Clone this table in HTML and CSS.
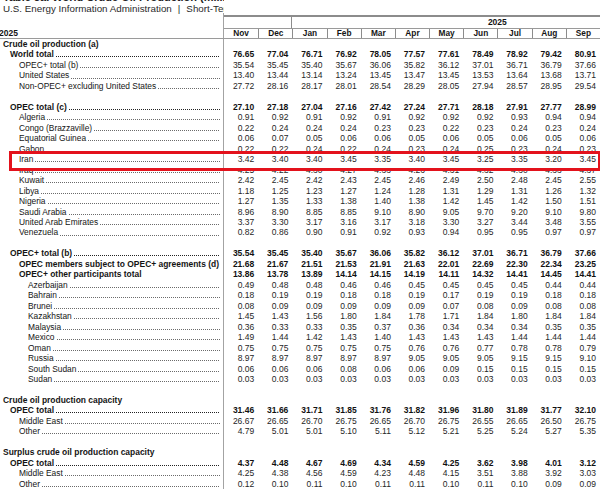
FILE: index.html
```html
<!DOCTYPE html>
<html lang="en">
<head>
<meta charset="utf-8">
<title>Table 3a. World Crude Oil Production</title>
<link rel="stylesheet" href="styles.css">
</head>
<body>
<div class="page">
  <div class="top">
    <div class="titlebox">
      <div class="title">Table 3a. World Crude Oil Production (million barrels per day)</div>
      <div class="subtitle">U.S. Energy Information Administration<span class="sep">|</span>Short-Term Energy Outlook</div>
    </div>
    <div class="topfill"></div>
  </div>

  <div class="hrow group">
    <div class="hl-cell"></div>
    <div class="prev"></div>
    <div class="yr"><span>2025</span></div>
  </div>
  <div class="hrow months">
    <div class="hl-cell yearlbl">2025</div>
    <div class="m first">Nov</div><div class="m">Dec</div><div class="m">Jan</div><div class="m">Feb</div><div class="m">Mar</div><div class="m">Apr</div><div class="m">May</div><div class="m">Jun</div><div class="m">Jul</div><div class="m">Aug</div><div class="m">Sep</div>
  </div>

  <div class="body">
    <div class="row b"><div class="lbl l0"><span>Crude oil production (a)</span></div></div>
    <div class="row b"><div class="lbl l1"><span>World total</span><i class="lead"></i></div><div class="n">76.65</div><div class="n">77.04</div><div class="n">76.71</div><div class="n">76.92</div><div class="n">78.05</div><div class="n">77.57</div><div class="n">77.61</div><div class="n">78.49</div><div class="n">78.92</div><div class="n">79.42</div><div class="n">80.91</div></div>
    <div class="row"><div class="lbl l2"><span>OPEC+ total (b)</span><i class="lead"></i></div><div class="n">35.54</div><div class="n">35.45</div><div class="n">35.40</div><div class="n">35.67</div><div class="n">36.06</div><div class="n">35.82</div><div class="n">36.12</div><div class="n">37.01</div><div class="n">36.71</div><div class="n">36.79</div><div class="n">37.66</div></div>
    <div class="row"><div class="lbl l2"><span>United States</span><i class="lead"></i></div><div class="n">13.40</div><div class="n">13.44</div><div class="n">13.14</div><div class="n">13.24</div><div class="n">13.45</div><div class="n">13.47</div><div class="n">13.45</div><div class="n">13.53</div><div class="n">13.64</div><div class="n">13.68</div><div class="n">13.71</div></div>
    <div class="row"><div class="lbl l2"><span>Non-OPEC+ excluding United States</span><i class="lead"></i></div><div class="n">27.72</div><div class="n">28.16</div><div class="n">28.17</div><div class="n">28.01</div><div class="n">28.54</div><div class="n">28.29</div><div class="n">28.05</div><div class="n">27.94</div><div class="n">28.57</div><div class="n">28.95</div><div class="n">29.54</div></div>
    <div class="row"><div class="lbl"></div></div>
    <div class="row b"><div class="lbl l1"><span>OPEC total (c)</span><i class="lead"></i></div><div class="n">27.10</div><div class="n">27.18</div><div class="n">27.04</div><div class="n">27.16</div><div class="n">27.42</div><div class="n">27.24</div><div class="n">27.71</div><div class="n">28.18</div><div class="n">27.91</div><div class="n">27.77</div><div class="n">28.99</div></div>
    <div class="row"><div class="lbl l2"><span>Algeria</span><i class="lead"></i></div><div class="n">0.91</div><div class="n">0.92</div><div class="n">0.91</div><div class="n">0.92</div><div class="n">0.91</div><div class="n">0.92</div><div class="n">0.92</div><div class="n">0.92</div><div class="n">0.93</div><div class="n">0.94</div><div class="n">0.94</div></div>
    <div class="row"><div class="lbl l2"><span>Congo (Brazzaville)</span><i class="lead"></i></div><div class="n">0.22</div><div class="n">0.24</div><div class="n">0.24</div><div class="n">0.24</div><div class="n">0.23</div><div class="n">0.23</div><div class="n">0.22</div><div class="n">0.23</div><div class="n">0.24</div><div class="n">0.23</div><div class="n">0.24</div></div>
    <div class="row"><div class="lbl l2"><span>Equatorial Guinea</span><i class="lead"></i></div><div class="n">0.06</div><div class="n">0.07</div><div class="n">0.05</div><div class="n">0.06</div><div class="n">0.06</div><div class="n">0.05</div><div class="n">0.06</div><div class="n">0.05</div><div class="n">0.06</div><div class="n">0.05</div><div class="n">0.06</div></div>
    <div class="row"><div class="lbl l2"><span>Gabon</span><i class="lead"></i></div><div class="n">0.22</div><div class="n">0.22</div><div class="n">0.24</div><div class="n">0.22</div><div class="n">0.24</div><div class="n">0.23</div><div class="n">0.24</div><div class="n">0.25</div><div class="n">0.23</div><div class="n">0.24</div><div class="n">0.23</div></div>
    <div class="row hl"><div class="lbl l2"><span>Iran</span><i class="lead"></i></div><div class="n">3.42</div><div class="n">3.40</div><div class="n">3.40</div><div class="n">3.45</div><div class="n">3.35</div><div class="n">3.40</div><div class="n">3.45</div><div class="n">3.25</div><div class="n">3.35</div><div class="n">3.20</div><div class="n">3.45</div></div>
    <div class="row"><div class="lbl l2"><span>Iraq</span><i class="lead"></i></div><div class="n">4.25</div><div class="n">4.22</div><div class="n">4.30</div><div class="n">4.27</div><div class="n">4.33</div><div class="n">4.26</div><div class="n">4.31</div><div class="n">4.32</div><div class="n">4.30</div><div class="n">4.33</div><div class="n">4.37</div></div>
    <div class="row"><div class="lbl l2"><span>Kuwait</span><i class="lead"></i></div><div class="n">2.42</div><div class="n">2.45</div><div class="n">2.42</div><div class="n">2.43</div><div class="n">2.45</div><div class="n">2.46</div><div class="n">2.49</div><div class="n">2.50</div><div class="n">2.48</div><div class="n">2.45</div><div class="n">2.55</div></div>
    <div class="row"><div class="lbl l2"><span>Libya</span><i class="lead"></i></div><div class="n">1.18</div><div class="n">1.25</div><div class="n">1.23</div><div class="n">1.27</div><div class="n">1.24</div><div class="n">1.28</div><div class="n">1.31</div><div class="n">1.29</div><div class="n">1.31</div><div class="n">1.26</div><div class="n">1.32</div></div>
    <div class="row"><div class="lbl l2"><span>Nigeria</span><i class="lead"></i></div><div class="n">1.27</div><div class="n">1.35</div><div class="n">1.33</div><div class="n">1.38</div><div class="n">1.40</div><div class="n">1.38</div><div class="n">1.42</div><div class="n">1.45</div><div class="n">1.42</div><div class="n">1.50</div><div class="n">1.51</div></div>
    <div class="row"><div class="lbl l2"><span>Saudi Arabia</span><i class="lead"></i></div><div class="n">8.96</div><div class="n">8.90</div><div class="n">8.85</div><div class="n">8.85</div><div class="n">9.10</div><div class="n">8.90</div><div class="n">9.05</div><div class="n">9.70</div><div class="n">9.20</div><div class="n">9.10</div><div class="n">9.80</div></div>
    <div class="row"><div class="lbl l2"><span>United Arab Emirates</span><i class="lead"></i></div><div class="n">3.37</div><div class="n">3.30</div><div class="n">3.17</div><div class="n">3.16</div><div class="n">3.17</div><div class="n">3.18</div><div class="n">3.30</div><div class="n">3.27</div><div class="n">3.44</div><div class="n">3.48</div><div class="n">3.55</div></div>
    <div class="row"><div class="lbl l2"><span>Venezuela</span><i class="lead"></i></div><div class="n">0.82</div><div class="n">0.86</div><div class="n">0.90</div><div class="n">0.91</div><div class="n">0.92</div><div class="n">0.93</div><div class="n">0.94</div><div class="n">0.95</div><div class="n">0.95</div><div class="n">0.97</div><div class="n">0.97</div></div>
    <div class="row"><div class="lbl"></div></div>
    <div class="row b"><div class="lbl l1"><span>OPEC+ total (b)</span><i class="lead"></i></div><div class="n">35.54</div><div class="n">35.45</div><div class="n">35.40</div><div class="n">35.67</div><div class="n">36.06</div><div class="n">35.82</div><div class="n">36.12</div><div class="n">37.01</div><div class="n">36.71</div><div class="n">36.79</div><div class="n">37.66</div></div>
    <div class="row b"><div class="lbl l2"><span>OPEC members subject to OPEC+ agreements (d)</span></div><div class="n">21.68</div><div class="n">21.67</div><div class="n">21.51</div><div class="n">21.53</div><div class="n">21.91</div><div class="n">21.63</div><div class="n">22.01</div><div class="n">22.69</div><div class="n">22.30</div><div class="n">22.34</div><div class="n">23.25</div></div>
    <div class="row b"><div class="lbl l2"><span>OPEC+ other participants total</span></div><div class="n">13.86</div><div class="n">13.78</div><div class="n">13.89</div><div class="n">14.14</div><div class="n">14.15</div><div class="n">14.19</div><div class="n">14.11</div><div class="n">14.32</div><div class="n">14.41</div><div class="n">14.45</div><div class="n">14.41</div></div>
    <div class="row"><div class="lbl l3"><span>Azerbaijan</span><i class="lead"></i></div><div class="n">0.49</div><div class="n">0.48</div><div class="n">0.48</div><div class="n">0.46</div><div class="n">0.46</div><div class="n">0.45</div><div class="n">0.45</div><div class="n">0.45</div><div class="n">0.45</div><div class="n">0.44</div><div class="n">0.44</div></div>
    <div class="row"><div class="lbl l3"><span>Bahrain</span><i class="lead"></i></div><div class="n">0.18</div><div class="n">0.19</div><div class="n">0.19</div><div class="n">0.18</div><div class="n">0.18</div><div class="n">0.19</div><div class="n">0.17</div><div class="n">0.19</div><div class="n">0.19</div><div class="n">0.18</div><div class="n">0.18</div></div>
    <div class="row"><div class="lbl l3"><span>Brunei</span><i class="lead"></i></div><div class="n">0.08</div><div class="n">0.09</div><div class="n">0.09</div><div class="n">0.09</div><div class="n">0.09</div><div class="n">0.09</div><div class="n">0.07</div><div class="n">0.08</div><div class="n">0.09</div><div class="n">0.08</div><div class="n">0.08</div></div>
    <div class="row"><div class="lbl l3"><span>Kazakhstan</span><i class="lead"></i></div><div class="n">1.45</div><div class="n">1.43</div><div class="n">1.56</div><div class="n">1.80</div><div class="n">1.84</div><div class="n">1.78</div><div class="n">1.71</div><div class="n">1.84</div><div class="n">1.80</div><div class="n">1.84</div><div class="n">1.84</div></div>
    <div class="row"><div class="lbl l3"><span>Malaysia</span><i class="lead"></i></div><div class="n">0.36</div><div class="n">0.33</div><div class="n">0.33</div><div class="n">0.35</div><div class="n">0.37</div><div class="n">0.36</div><div class="n">0.34</div><div class="n">0.34</div><div class="n">0.34</div><div class="n">0.35</div><div class="n">0.35</div></div>
    <div class="row"><div class="lbl l3"><span>Mexico</span><i class="lead"></i></div><div class="n">1.49</div><div class="n">1.44</div><div class="n">1.42</div><div class="n">1.43</div><div class="n">1.40</div><div class="n">1.43</div><div class="n">1.43</div><div class="n">1.43</div><div class="n">1.44</div><div class="n">1.44</div><div class="n">1.44</div></div>
    <div class="row"><div class="lbl l3"><span>Oman</span><i class="lead"></i></div><div class="n">0.75</div><div class="n">0.75</div><div class="n">0.75</div><div class="n">0.75</div><div class="n">0.75</div><div class="n">0.76</div><div class="n">0.76</div><div class="n">0.77</div><div class="n">0.78</div><div class="n">0.78</div><div class="n">0.79</div></div>
    <div class="row"><div class="lbl l3"><span>Russia</span><i class="lead"></i></div><div class="n">8.97</div><div class="n">8.97</div><div class="n">8.97</div><div class="n">8.97</div><div class="n">8.97</div><div class="n">9.05</div><div class="n">9.05</div><div class="n">9.05</div><div class="n">9.15</div><div class="n">9.15</div><div class="n">9.10</div></div>
    <div class="row"><div class="lbl l3"><span>South Sudan</span><i class="lead"></i></div><div class="n">0.06</div><div class="n">0.06</div><div class="n">0.06</div><div class="n">0.08</div><div class="n">0.06</div><div class="n">0.06</div><div class="n">0.09</div><div class="n">0.15</div><div class="n">0.15</div><div class="n">0.15</div><div class="n">0.15</div></div>
    <div class="row"><div class="lbl l3"><span>Sudan</span><i class="lead"></i></div><div class="n">0.03</div><div class="n">0.03</div><div class="n">0.03</div><div class="n">0.03</div><div class="n">0.03</div><div class="n">0.03</div><div class="n">0.03</div><div class="n">0.03</div><div class="n">0.03</div><div class="n">0.03</div><div class="n">0.03</div></div>
    <div class="row"><div class="lbl"></div></div>
    <div class="row b"><div class="lbl l0"><span>Crude oil production capacity</span></div></div>
    <div class="row b"><div class="lbl l1"><span>OPEC total</span><i class="lead"></i></div><div class="n">31.46</div><div class="n">31.66</div><div class="n">31.71</div><div class="n">31.85</div><div class="n">31.76</div><div class="n">31.82</div><div class="n">31.96</div><div class="n">31.80</div><div class="n">31.89</div><div class="n">31.77</div><div class="n">32.10</div></div>
    <div class="row"><div class="lbl l2"><span>Middle East</span><i class="lead"></i></div><div class="n">26.67</div><div class="n">26.65</div><div class="n">26.70</div><div class="n">26.75</div><div class="n">26.65</div><div class="n">26.70</div><div class="n">26.75</div><div class="n">26.55</div><div class="n">26.65</div><div class="n">26.50</div><div class="n">26.75</div></div>
    <div class="row"><div class="lbl l2"><span>Other</span><i class="lead"></i></div><div class="n">4.79</div><div class="n">5.01</div><div class="n">5.01</div><div class="n">5.10</div><div class="n">5.11</div><div class="n">5.12</div><div class="n">5.21</div><div class="n">5.25</div><div class="n">5.24</div><div class="n">5.27</div><div class="n">5.35</div></div>
    <div class="row"><div class="lbl"></div></div>
    <div class="row b"><div class="lbl l0"><span>Surplus crude oil production capacity</span></div></div>
    <div class="row b"><div class="lbl l1"><span>OPEC total</span><i class="lead"></i></div><div class="n">4.37</div><div class="n">4.48</div><div class="n">4.67</div><div class="n">4.69</div><div class="n">4.34</div><div class="n">4.59</div><div class="n">4.25</div><div class="n">3.62</div><div class="n">3.98</div><div class="n">4.01</div><div class="n">3.12</div></div>
    <div class="row"><div class="lbl l2"><span>Middle East</span><i class="lead"></i></div><div class="n">4.25</div><div class="n">4.38</div><div class="n">4.56</div><div class="n">4.59</div><div class="n">4.23</div><div class="n">4.48</div><div class="n">4.15</div><div class="n">3.51</div><div class="n">3.88</div><div class="n">3.92</div><div class="n">3.03</div></div>
    <div class="row"><div class="lbl l2"><span>Other</span><i class="lead"></i></div><div class="n">0.12</div><div class="n">0.10</div><div class="n">0.11</div><div class="n">0.10</div><div class="n">0.11</div><div class="n">0.11</div><div class="n">0.10</div><div class="n">0.11</div><div class="n">0.10</div><div class="n">0.09</div><div class="n">0.09</div></div>
  </div>
</div>
</body>
</html>
```

FILE: styles.css
```css
html, body {
  margin: 0;
  padding: 0;
  background: #fff;
  overflow: hidden;
}

.page {
  width: 600px;
  height: 490px;
  overflow: hidden;
  font-family: "Liberation Sans", Arial, sans-serif;
  color: #141414;
}

/* ---------- title block ---------- */
.top {
  display: grid;
  grid-template-columns: 224px 1fr;
  height: 17px;
}

.titlebox {
  overflow: hidden;
  white-space: nowrap;
  background: linear-gradient(#a3a3a3, #a3a3a3) no-repeat right bottom / 1px 4px;
}

.title {
  font-size: 11px;
  font-weight: 700;
  line-height: 12px;
  margin-top: -8.6px;
  padding-left: 3px;
  color: #222;
}

.subtitle {
  font-size: 9.8px;
  line-height: 11px;
  margin-top: -0.6px;
  padding-left: 3px;
  color: #2a2a2a;
}

.sep {
  margin: 0 6px;
}

.topfill {
  border-bottom: 2px solid #8c8c8c;
}

/* ---------- column headers ---------- */
.hrow {
  display: grid;
  grid-template-columns: 224px repeat(11, 1fr);
}

.hl-cell {
  border-right: 1px solid #a3a3a3;
}

.group {
  height: 12px;
}

.group .prev {
  grid-column: span 2;
  border-right: 1px solid #8c8c8c;
  border-bottom: 1px solid #9a9a9a;
}

.group .yr {
  grid-column: span 9;
  border-bottom: 1px solid #9a9a9a;
}

.yr span {
  display: block;
  width: 410px;
  text-align: center;
  font-size: 8.5px;
  font-weight: 700;
  line-height: 11px;
}

.months {
  height: 10px;
  border-bottom: 1px solid #9a9a9a;
  box-sizing: border-box;
}

.yearlbl {
  font-size: 8.5px;
  font-weight: 700;
  line-height: 9px;
  margin-left: -1px;
}

.m {
  font-size: 8.3px;
  font-weight: 700;
  line-height: 9px;
  text-align: center;
  border-left: 1px solid #8c8c8c;
}

.m.first {
  border-left: none;
}

/* ---------- body rows ---------- */
.row {
  display: grid;
  grid-template-columns: 224px repeat(11, 1fr);
  height: 10.48px;
  line-height: 10.48px;
}

.lbl {
  display: flex;
  align-items: flex-end;
  border-right: 1px solid #a3a3a3;
  padding-right: 3px;
  overflow: hidden;
  white-space: nowrap;
  font-size: 8.4px;
}

.lbl span {
  flex: none;
}

.l0 { padding-left: 3px; }
.l1 { padding-left: 10px; }
.l2 { padding-left: 19px; }
.l3 { padding-left: 28px; }

.lead {
  flex: 1;
  height: 1px;
  margin: 0 0 2.4px 2px;
  background-image: linear-gradient(90deg, #6a6a6a 0 1px, transparent 1px);
  background-size: 2px 1px;
  background-repeat: repeat-x;
}

.n {
  text-align: right;
  padding-right: 4px;
  font-size: 8.5px;
  color: #262626;
}

.row.b .lbl {
  font-weight: 700;
  font-size: 8.45px;
}

.row.b .n {
  font-weight: 700;
  color: #111;
}

.row.b .lead {
  height: 1.3px;
  background-image: linear-gradient(90deg, #222 0 1.2px, transparent 1.2px);
}

/* ---------- highlighted row (red box) ---------- */
.row.hl {
  position: relative;
  z-index: 1;
}

.row.hl::before {
  content: "";
  position: absolute;
  z-index: -1;
  left: 9px;
  right: -1px;
  top: -3.3px;
  bottom: -6.2px;
  border: 3px solid #e3121c;
  background: linear-gradient(#a3a3a3, #a3a3a3) no-repeat 211px 0 / 1px 100%, #fff;
}
```
